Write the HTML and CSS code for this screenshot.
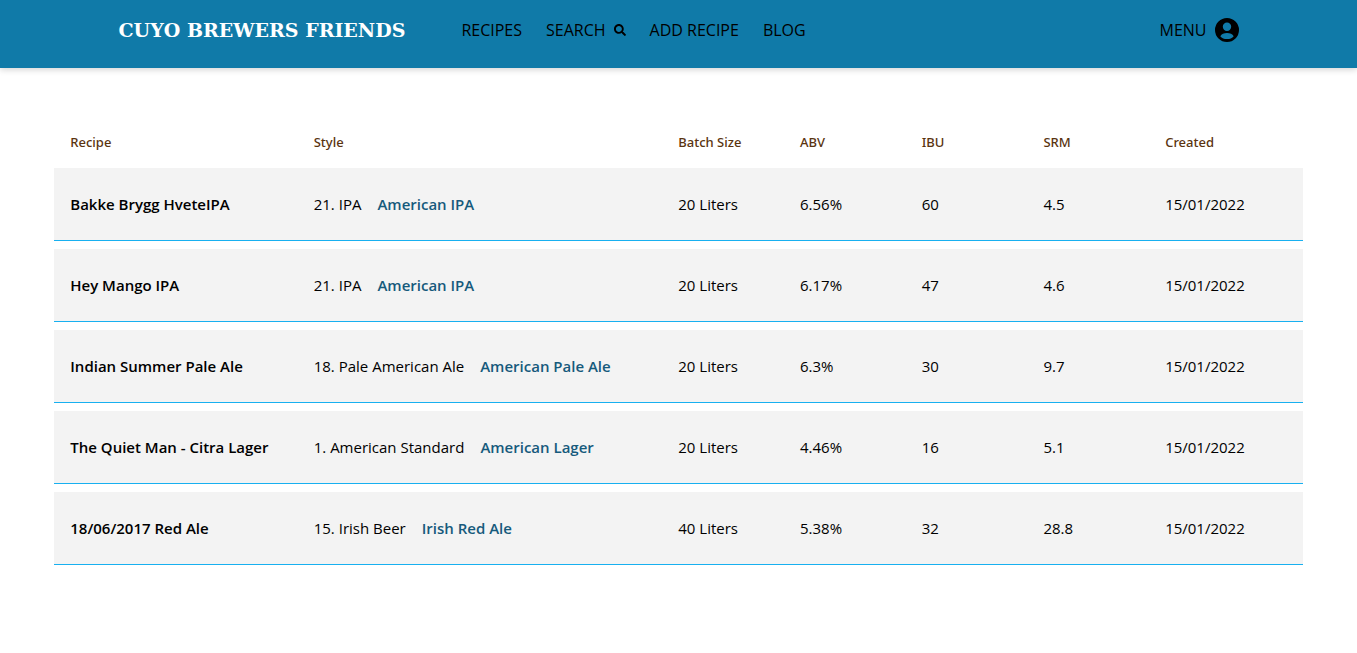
FILE: index.html
```html
<!DOCTYPE html>
<html lang="en">
<head>
<meta charset="utf-8">
<meta name="viewport" content="width=device-width, initial-scale=1">
<title>Cuyo Brewers Friends</title>
<link rel="stylesheet" href="styles.css">
</head>
<body>
<header class="site-header">
  <div class="header-inner">
    <a class="brand" href="#">CUYO BREWERS FRIENDS</a>
    <nav class="main-nav">
      <a class="nav-link" href="#">RECIPES</a>
      <a class="nav-link" href="#">SEARCH
        <svg class="search-icon" viewBox="0 0 512 512" aria-hidden="true"><path fill="currentColor" d="M505 442.700 405.300 343c-4.500-4.500-10.600-7-17-7H372c27.600-35.300 44-79.700 44-128C416 93.100 322.900 0 208 0S0 93.100 0 208s93.100 208 208 208c48.300 0 92.700-16.400 128-44v16.300c0 6.400 2.500 12.500 7 17l99.700 99.700c9.400 9.400 24.600 9.400 33.900 0l28.300-28.300c9.400-9.400 9.400-24.600.1-34zM208 336c-70.700 0-128-57.200-128-128 0-70.700 57.200-128 128-128 70.700 0 128 57.200 128 128 0 70.700-57.200 128-128 128z"/></svg>
      </a>
      <a class="nav-link" href="#">ADD RECIPE</a>
      <a class="nav-link" href="#">BLOG</a>
    </nav>
    <button class="menu-button" type="button">MENU
      <svg class="user-icon" viewBox="0 0 24 24" aria-hidden="true"><path fill="currentColor" fill-rule="evenodd" d="M12 0a12 12 0 1 0 0 24a12 12 0 1 0 0-24zM12 4.500a4.200 4.200 0 1 1 0 8.400a4.200 4.200 0 1 1 0-8.400zM5.300 18.200C6.500 15.900 9 15 12 15s5.500.9 6.700 3.200C17.300 20.200 14.800 21 12 21s-5.300-.8-6.700-2.800z"/></svg>
    </button>
  </div>
</header>
<main class="content">
  <table class="recipes">
    <colgroup>
      <col class="col-recipe"><col class="col-style"><col class="col-small"><col class="col-small"><col class="col-small"><col class="col-small"><col>
    </colgroup>
    <thead>
      <tr><th scope="col">Recipe</th><th scope="col">Style</th><th scope="col">Batch Size</th><th scope="col">ABV</th><th scope="col">IBU</th><th scope="col">SRM</th><th scope="col">Created</th></tr>
    </thead>
    <tbody>
      <tr><td class="name">Bakke Brygg HveteIPA</td><td>21. IPA<a class="style-link" href="#">American IPA</a></td><td>20 Liters</td><td>6.56%</td><td>60</td><td>4.5</td><td>15/01/2022</td></tr>
      <tr><td class="name">Hey Mango IPA</td><td>21. IPA<a class="style-link" href="#">American IPA</a></td><td>20 Liters</td><td>6.17%</td><td>47</td><td>4.6</td><td>15/01/2022</td></tr>
      <tr><td class="name">Indian Summer Pale Ale</td><td>18. Pale American Ale<a class="style-link" href="#">American Pale Ale</a></td><td>20 Liters</td><td>6.3%</td><td>30</td><td>9.7</td><td>15/01/2022</td></tr>
      <tr><td class="name">The Quiet Man - Citra Lager</td><td>1. American Standard<a class="style-link" href="#">American Lager</a></td><td>20 Liters</td><td>4.46%</td><td>16</td><td>5.1</td><td>15/01/2022</td></tr>
      <tr><td class="name">18/06/2017 Red Ale</td><td>15. Irish Beer<a class="style-link" href="#">Irish Red Ale</a></td><td>40 Liters</td><td>5.38%</td><td>32</td><td>28.8</td><td>15/01/2022</td></tr>
    </tbody>
  </table>
</main>
</body>
</html>
```

FILE: styles.css
```css
* {
  box-sizing: border-box;
}

body {
  margin: 0;
  background: #fff;
  color: #000;
  font-family: "Open Sans", "Noto Sans", sans-serif;
  font-size: 15px;
  line-height: 24px;
}

.site-header {
  background: #107aa8;
  box-shadow: 0 2px 6px rgba(0, 0, 0, 0.16);
}

.header-inner {
  display: flex;
  align-items: center;
  max-width: 1120px;
  margin: 0 auto;
  padding: 18px 0 26px;
}

.brand {
  margin-right: 56px;
  color: #fff;
  font-family: "DejaVu Serif", serif;
  font-size: 19px;
  font-weight: 700;
  text-decoration: none;
  white-space: nowrap;
}

.main-nav {
  display: flex;
  gap: 24px;
}

.nav-link {
  display: flex;
  align-items: center;
  gap: 8px;
  color: #000;
  font-size: 16px;
  text-decoration: none;
  white-space: nowrap;
}

.search-icon {
  width: 12px;
  height: 12px;
}

.menu-button {
  display: flex;
  align-items: center;
  gap: 8px;
  margin-left: auto;
  padding: 0;
  border: 0;
  background: none;
  color: #000;
  font: inherit;
  font-size: 16px;
}

.user-icon {
  width: 24px;
  height: 24px;
}

.content {
  width: 92%;
  margin: 0 auto;
  padding: 48px 0;
}

.recipes {
  width: 100%;
  table-layout: fixed;
  border-collapse: separate;
  border-spacing: 0 8px;
}

.col-recipe {
  width: 19.5%;
}

.col-style {
  width: 29.2%;
}

.col-small {
  width: 9.75%;
}

.recipes th {
  padding: 6px 0 6px 16px;
  color: #5a3410;
  font-family: "Noto Sans", sans-serif;
  font-size: 13px;
  font-weight: 500;
  text-align: left;
}

.recipes td {
  padding: 24px 0 24px 16px;
  border-bottom: 1px solid #18b0f0;
  background: #f3f3f3;
  white-space: nowrap;
}

.recipes .name {
  font-weight: 600;
}

.style-link {
  margin-left: 16px;
  color: #165a7c;
  font-weight: 600;
  text-decoration: none;
}
```
